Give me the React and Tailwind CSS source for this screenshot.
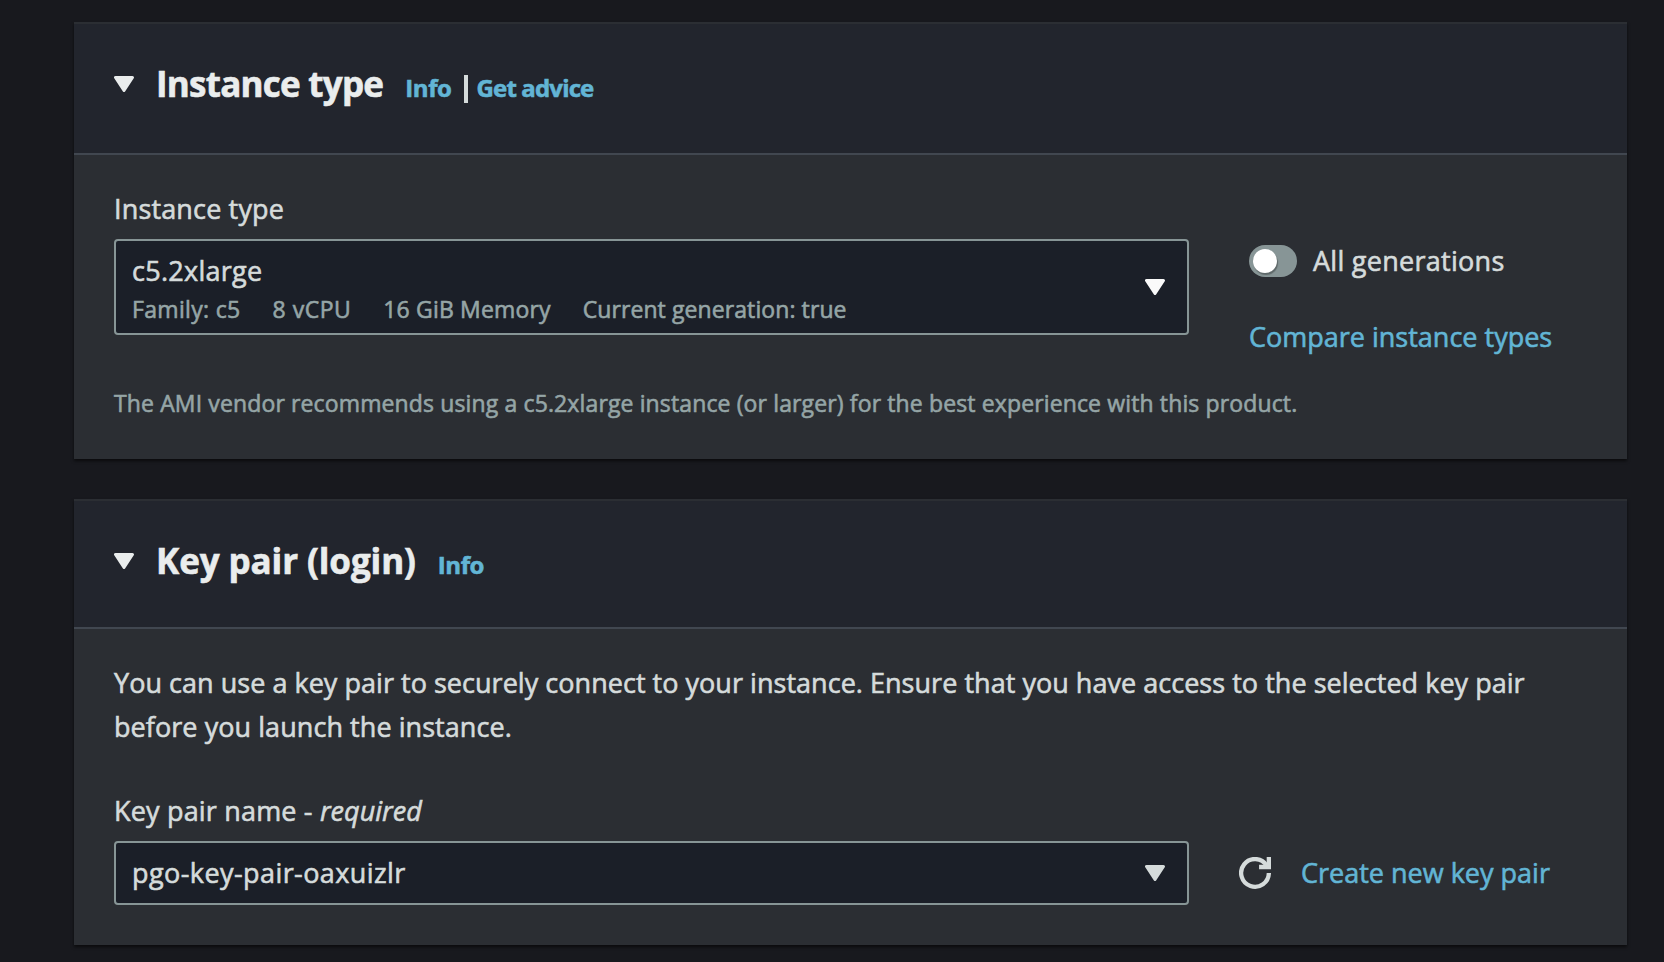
function Caret({ className }) {
  return (
    <svg viewBox="0 0 20 16" className={`h-4 w-5 shrink-0 ${className}`}>
      <path d="M1.5 1.5h17L10 14.5z" fill="currentColor" stroke="currentColor" strokeWidth="3" strokeLinejoin="round" />
    </svg>
  );
}

function RefreshIcon() {
  return (
    <svg viewBox="0 0 16 16" className="size-8 shrink-0 text-[#d5dbdb]" fill="none" stroke="currentColor" strokeWidth="2.15">
      <path d="M14.93 8a6.93 6.93 0 1 1-1.1-3.8" />
      <path d="M14.93 0v5h-4.9" />
    </svg>
  );
}

function Link({ className = "", children }) {
  return (
    <a href="#" className={`whitespace-nowrap text-[#62b5d5] ${className}`}>
      {children}
    </a>
  );
}

function Panel({ title, titleClass, links, headerClass, bodyClass, children }) {
  return (
    <section className="border-t-2 border-[#2b2e33] bg-[#2b2e33] shadow-[0_2px_3px_rgba(0,0,0,0.6)]">
      <header className={`flex items-start border-b-2 border-[#414750] bg-[#22252d] pl-10 pt-[37px] font-bold ${headerClass}`}>
        <Caret className="mt-[15px] text-[#eaeded]" />
        <h2 className={`ml-[22px] mt-px whitespace-nowrap text-[35px] leading-[44px] text-[#eaeded] ${titleClass}`}>{title}</h2>
        {links}
      </header>
      <div className={`px-10 ${bodyClass}`}>{children}</div>
    </section>
  );
}

export default function App() {
  return (
    <main className="flex h-[962px] w-[1664px] flex-col gap-10 overflow-hidden bg-[#18191e] pl-[74px] pr-[37px] pt-[22px] font-['Open_Sans',sans-serif] text-[27px] leading-[44px] text-[#d5dbdb] [-webkit-text-stroke:0.6px]">
      <Panel
        title="Instance type"
        titleClass="tracking-[-0.75px]"
        headerClass="h-[131px]"
        bodyClass="h-[304px] pt-8"
        links={
          <div className="ml-[22px] mt-px flex items-start text-2xl leading-[52px]">
            <Link className="tracking-[-0.4px]">Info</Link>
            <span className="ml-3 mt-[13px] h-7 w-1 bg-[#d5dbdb]" />
            <Link className="ml-[9px] tracking-[-0.85px]">Get advice</Link>
          </div>
        }
      >
        <div className="flex">
          <div className="w-[1075px]">
            <div className="tracking-[0.15px]">Instance type</div>
            <div className="mt-2 flex h-24 items-center rounded-[4px] border-2 border-[#879596] bg-[#1b1f28] pl-4 pr-[22px]">
              <div className="grow pt-1.5">
                <div className="h-[38px] leading-[38px] tracking-[0.27px]">c5.2xlarge</div>
                <div className="flex h-[38px] gap-8 text-[23px] leading-[38px] text-[#95a5a6]">
                  <span className="tracking-[0.33px]">Family: c5</span>
                  <span className="tracking-[0.5px]">8 vCPU</span>
                  <span className="tracking-[0.16px]">16 GiB Memory</span>
                  <span className="tracking-[0.09px]">Current generation: true</span>
                </div>
              </div>
              <Caret className="text-[#fafafa]" />
            </div>
          </div>
          <div className="ml-[60px] pt-[52px]">
            <div className="flex items-center gap-4">
              <span className="flex h-8 w-12 items-center rounded-full bg-[#879596] px-1">
                <span className="size-6 rounded-full bg-white shadow-[1px_2px_1px_rgba(0,0,0,0.3)]" />
              </span>
              <span className="tracking-[0.28px]">All generations</span>
            </div>
            <Link className="mt-8 block">Compare instance types</Link>
          </div>
        </div>
        <p className="mt-[22px] whitespace-nowrap text-[23px] tracking-[0.13px] text-[#95a5a6]">
          The AMI vendor recommends using a c5.2xlarge instance (or larger) for the best experience with this product.
        </p>
      </Panel>

      <Panel
        title="Key pair (login)"
        titleClass="tracking-[-0.1px]"
        headerClass="h-[128px]"
        bodyClass="h-[316px] pt-8"
        links={<Link className="ml-[22px] mt-px text-2xl leading-[52px] tracking-[-0.4px]">Info</Link>}
      >
        <p className="whitespace-nowrap tracking-[0.03px]">
          You can use a key pair to securely connect to your instance. Ensure that you have access to the selected key pair
          <br />
          <span className="tracking-[0.06px]">before you launch the instance.</span>
        </p>
        <div className="mt-10 tracking-[0.18px]">
          Key pair name - <em className="tracking-normal">required</em>
        </div>
        <div className="mt-2 flex items-center">
          <div className="flex h-16 w-[1075px] items-center justify-between rounded-[4px] border-2 border-[#879596] bg-[#1b1f28] pl-4 pr-[22px]">
            <span className="tracking-[0.42px]">pgo-key-pair-oaxuizlr</span>
            <Caret className="text-[#d5dbdb]" />
          </div>
          <div className="ml-[50px] flex items-center gap-[30px]">
            <RefreshIcon />
            <Link>Create new key pair</Link>
          </div>
        </div>
      </Panel>
    </main>
  );
}
